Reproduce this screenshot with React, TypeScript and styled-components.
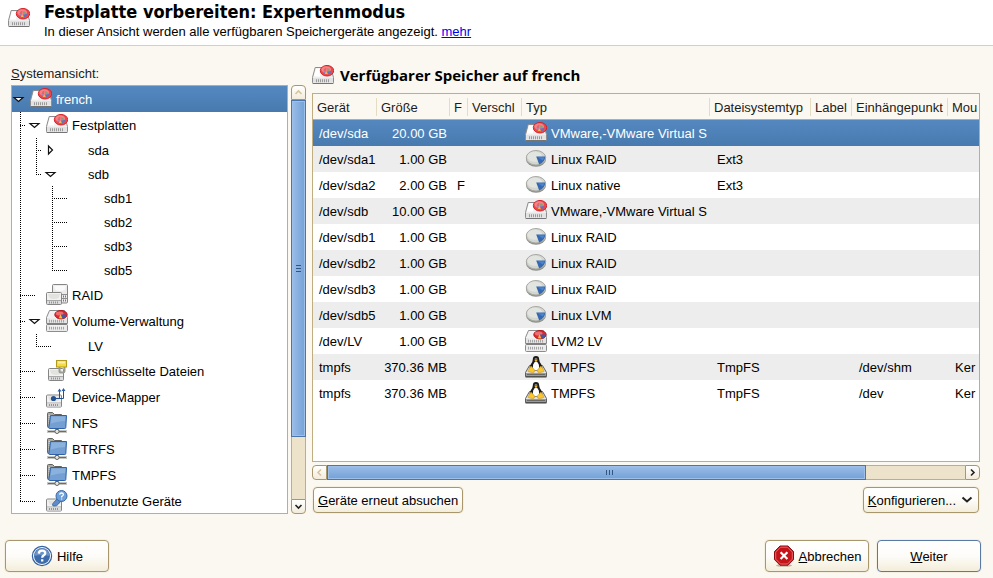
import React from 'react';
import styled, { createGlobalStyle, css } from 'styled-components';

const sand = '#c1ae80';
const sandDark = '#a8966c';
const sans = '"Liberation Sans", Arial, sans-serif';
const heading = '"Open Sans", "Noto Sans", sans-serif';

const GlobalStyle = createGlobalStyle`
  *, *::before, *::after { box-sizing: border-box; }
  body { margin: 0; background: #fbf8f1; color: #000; font: 13px/16px ${sans}; }
  button { font: inherit; color: inherit; margin: 0; }
`;

const Page = styled.div`
  display: flex;
  flex-direction: column;
  height: 100vh;
  overflow: hidden;
`;

const Header = styled.header`
  display: flex;
  align-items: flex-start;
  gap: 14px;
  height: 46px;
  padding: 0 8px;
  background: #fff;
  border-bottom: 1px solid #dccfb0;
`;

const HeaderIcon = styled.span`
  display: flex;
  padding-top: 8px;
`;

const Title = styled.h1`
  margin: 0;
  font: 700 18px/24px "DejaVu Sans Condensed", ${heading};
`;

const Subtitle = styled.p`
  margin: 0;
`;

const MoreLink = styled.a`
  color: #0000ee;
`;

const Main = styled.main`
  flex: 1;
  min-height: 0;
  display: grid;
  grid-template-columns: 295fr 668fr;
  column-gap: 6px;
  padding: 19px 13px 0 11px;
`;

const Column = styled.section`
  display: flex;
  flex-direction: column;
  min-width: 0;
  min-height: 0;
`;

const TreeLabel = styled.h2`
  margin: 0 0 2px;
  font: 13px/18px ${sans};
  color: #1c1c1c;
`;

const TreeArea = styled.div`
  flex: 1;
  min-height: 0;
  display: flex;
  gap: 3px;
`;

const Tree = styled.ul`
  flex: 1;
  display: flex;
  flex-direction: column;
  margin: 0;
  padding: 0;
  list-style: none;
  overflow: hidden;
  background: #fff;
  border: 1px solid ${sand};
`;

const selected = css`
  background: linear-gradient(#5588bf, #487aaf);
  color: #fff;
`;

const TreeRow = styled.li<{ $short?: boolean; $selected?: boolean }>`
  flex: none;
  display: flex;
  align-items: center;
  height: ${p => (p.$short ? 24 : 26)}px;
  ${p => p.$selected && selected}
`;

type GuideKind = 'none' | 'pass' | 'tee' | 'end';

const Guide = styled.span<{ $kind: GuideKind }>`
  flex: none;
  align-self: stretch;
  width: 16px;
  background-repeat: no-repeat;
  ${p => p.$kind !== 'none' && css`
    background-image: repeating-linear-gradient(#000 0 1px, transparent 1px 2px)
      ${p.$kind !== 'pass' && ', repeating-linear-gradient(90deg, #000 0 1px, transparent 1px 2px)'};
    background-size: 1px ${p.$kind === 'end' ? '50%' : '100%'}, 5px 1px;
    background-position: 8px 0, 8px 50%;
  `}
`;

const Slot = styled.span<{ $leaf?: boolean; $closed?: boolean }>`
  flex: none;
  display: flex;
  align-items: center;
  align-self: stretch;
  width: 18px;
  padding-left: ${p => (p.$closed ? 2 : 0)}px;
  ${p => p.$leaf && css`
    margin-left: -3px;
    margin-right: 3px;
    background: repeating-linear-gradient(90deg, transparent 0 1px, #000 1px 2px) 0 50% / 10px 1px no-repeat;
  `}
`;

const Expander = styled.button`
  display: flex;
  padding: 0;
  border: 0;
  background: none;
`;

const IconBox = styled.span`
  flex: none;
  display: flex;
  width: 22px;
  height: 22px;
  margin-right: 4px;
`;

const RowText = styled.span`
  padding-top: 2px;
`;

const ScrollArrow = styled.button<{ $horizontal?: boolean; $end?: boolean; $off?: boolean }>`
  flex: none;
  display: flex;
  align-items: center;
  justify-content: center;
  width: 15px;
  height: 15px;
  padding: 0;
  border: 1px solid ${sandDark};
  background: linear-gradient(#fff, #f3ecdb);
  color: ${p => (p.$off ? '#d6c59b' : '#222')};
  border-radius: ${p =>
    p.$horizontal ? (p.$end ? '0 4px 4px 0' : '4px 0 0 4px') : p.$end ? '0 0 4px 4px' : '4px 4px 0 0'};
`;

const ScrollBar = styled.div<{ $horizontal?: boolean }>`
  flex: none;
  display: flex;
  flex-direction: ${p => (p.$horizontal ? 'row' : 'column')};
  ${p => (p.$horizontal ? 'height: 15px; margin-top: 3px;' : 'width: 15px;')}
`;

const Track = styled.div<{ $horizontal?: boolean }>`
  flex: 1;
  display: flex;
  flex-direction: ${p => (p.$horizontal ? 'row' : 'column')};
  background: #ede3cb;
  border: solid ${sand};
  border-width: ${p => (p.$horizontal ? '1px 0' : '0 1px')};
`;

const Thumb = styled.div<{ $horizontal?: boolean }>`
  display: flex;
  align-items: center;
  justify-content: center;
  flex: 0 0 84.5%;
  border: 1px solid #4b76ab;
  box-shadow: inset 0 0 0 1px #9cc0ea;
  color: #33557f;
  ${p =>
    p.$horizontal
      ? 'margin: -1px 0; padding-left: 26px; background: linear-gradient(#99bde8, #74a1d6);'
      : 'margin: 0 -1px; background: linear-gradient(90deg, #99bde8, #74a1d6);'}
`;

const PanelHeading = styled.h2`
  display: flex;
  align-items: center;
  gap: 6px;
  height: 22px;
  margin: 0 0 6px;
  font: 700 15px/20px ${heading};
`;

const HeadingText = styled.span`
  padding-bottom: 2px;
`;

const TableFrame = styled.div`
  flex: 1;
  min-height: 0;
  overflow: hidden;
  background: #fff;
  border: 1px solid ${sand};
`;

const DeviceTable = styled.table`
  width: 100%;
  table-layout: fixed;
  border-collapse: separate;
  border-spacing: 0;
`;

const HeadCell = styled.th<{ $width?: number }>`
  width: ${p => (p.$width ? `${p.$width}px` : 'auto')};
  height: 26px;
  padding: 2px 0 0 4px;
  text-align: left;
  font-weight: 400;
  white-space: nowrap;
  overflow: hidden;
  color: #1c1c1c;
  border-bottom: 1px solid ${sand};
  background: #fbf8f1;
  &:not(:last-child) {
    background: linear-gradient(#e6dcc0, #e6dcc0) 100% 4px / 1px 18px no-repeat #fbf8f1;
  }
`;

const Row = styled.tr<{ $selected?: boolean }>`
  &:nth-child(even) { background: #ededed; }
  ${p => p.$selected && selected}
`;

const Cell = styled.td<{ $numeric?: boolean; $first?: boolean; $icon?: boolean }>`
  height: 26px;
  padding: ${p => (p.$icon ? 0 : 2)}px 3px 0 ${p => (p.$first ? 6 : p.$icon || p.$numeric ? 3 : 7)}px;
  text-align: ${p => (p.$numeric ? 'right' : 'left')};
  white-space: nowrap;
  overflow: hidden;
  &:last-child { padding-right: 0; }
`;

const TypeLabel = styled.span`
  display: flex;
  align-items: center;
`;

const Actions = styled.div`
  display: flex;
  justify-content: space-between;
  margin: 7px 1px 1px;
`;

const Button = styled.button<{ $large?: boolean; $primary?: boolean }>`
  display: flex;
  align-items: center;
  justify-content: center;
  gap: 4px;
  ${p => (p.$large ? 'width: 104px; height: 32px; padding: 0;' : 'height: 26px; padding: 0 4px;')}
  border: 1px solid ${p => (p.$primary ? '#5a7aa5' : sandDark)};
  border-radius: 4px;
  background: linear-gradient(#fff 0%, #fdfcf9 50%, #f3edda 100%);
  box-shadow: 0 0 0 1px #f5efe1;
  white-space: nowrap;
`;

const Footer = styled.footer`
  display: flex;
  gap: 8px;
  padding: 26px 12px 6px 5px;
`;

const Spacer = styled.span`
  flex: 1;
`;

/* ---------- icons ---------- */

const Icon = styled.svg.attrs({ width: 22, height: 22, viewBox: '0 0 22 22', 'aria-hidden': true })`
  flex: none;
  display: block;
`;

const DiskIcon = () => (
  <Icon>
    <path d="M3.2 2.5H18.6L21.5 12.5V17.5Q21.5 18.5 20.5 18.5H1.5Q.5 18.5 .5 17.5V12.5Z" fill="#efefef" stroke="#8c8c8c" />
    <path d="M4 3.4H9L8 11.5H1.8Z" fill="#fff" />
    <path d="M1 13H21V17.6H1Z" fill="#e2e2e2" />
    <path d="M4 15.8H18" stroke="#9a9a9a" strokeWidth="3" strokeDasharray="1 1" />
    <path d="M.8 18.5H21.2" stroke="#747474" />
    <ellipse cx="15" cy="5.7" rx="6.7" ry="5.3" fill="#f0474b" stroke="#d3252b" />
    <ellipse cx="14.2" cy="4.6" rx="4.8" ry="3.4" fill="#f58386" />
    <path d="M14.4 2.6Q12 3 11.4 5.8L14.2 6.2Z" fill="#e2656c" />
    <path d="M15 3.2Q17.6 3.2 18.4 5.6L15.4 6Z" fill="#86a070" />
    <path d="M14.8 6.4L19.4 6Q18.8 8.8 16.6 9.2Z" fill="#5577c4" />
    <path d="M14.2 6.4L16 9.2L12.8 8.8Z" fill="#edbd50" />
    <path d="M11.6 6.2L14 6.4L12.6 8.6Q11.6 7.6 11.6 6.2Z" fill="#8385c8" />
  </Icon>
);

const PartitionIcon = () => (
  <Icon>
    <ellipse cx="11" cy="11.2" rx="10" ry="7.6" fill="#8f918c" />
    <ellipse cx="11" cy="9.8" rx="9.7" ry="7.3" fill="#d3d5cf" stroke="#a6a8a2" />
    <ellipse cx="9.8" cy="8.6" rx="7.4" ry="5.2" fill="#e2e4df" />
    <path d="M11.2 8.4H20.2Q20.4 13.8 14.2 16.4Z" fill="#3569b2" />
    <path d="M13 9.2H19.4Q19 11.2 17.6 12.6Z" fill="#4d83ca" />
  </Icon>
);

const Drive = ({ x, y }: { x: number; y: number }) => (
  <g transform={`translate(${x} ${y})`}>
    <rect x=".5" y=".5" width="15" height="12" rx="1" fill="#f2f2f2" stroke="#858585" />
    <path d="M2 2H14L12.6 6Q8 8 3.4 6Z" fill="#e2e2de" />
    <path d="M1 8.5H15" stroke="#a8a8a8" />
    <path d="M1 9H15V12H1Z" fill="#dcdcdc" />
    <path d="M3 10.5H12" stroke="#959595" strokeWidth="2" strokeDasharray="1 1" />
  </g>
);

const RaidIcon = () => (
  <Icon>
    <rect x="6.5" y=".5" width="15" height="18.5" rx="1" fill="#ececec" stroke="#858585" />
    <path d="M8 2H20L18.6 6Q14 8 9.4 6Z" fill="#fafafa" />
    <path d="M7 10.5H21M7 14.5H21" stroke="#8f8f8f" />
    <path d="M17 12.6H20M17 16.6H20" stroke="#777" strokeWidth="2" strokeDasharray="1 1" />
    <Drive x={0} y={8} />
  </Icon>
);

const VolumeIcon = () => (
  <Icon>
    <path d="M3.5 .5H18.5L21.5 7.5V13.5H.5V7.5Z" fill="#f2f2f2" stroke="#8c8c8c" />
    <path d="M1 8H21V13H1Z" fill="#e4e4e4" />
    <rect x=".5" y="14.5" width="21" height="7" rx="1" fill="#ebebeb" stroke="#8c8c8c" />
    <path d="M1 14H21" stroke="#747474" />
    <path d="M3 11H18M3 18H18" stroke="#a6a6a6" strokeWidth="3" strokeDasharray="1 1" />
    <path d="M3.5 9H18.5M3.5 16H18.5" stroke="#f8f8f8" />
    <ellipse cx="15" cy="4.7" rx="6.2" ry="4.2" fill="#dd2a30" stroke="#b0181e" />
    <ellipse cx="13.6" cy="3.6" rx="3.8" ry="2" fill="#ef6c6f" />
    <path d="M15 4.4H20.4Q20.2 8.2 16.6 8.6Z" fill="#3a5cab" />
    <path d="M14.6 4.2L16.4 8.6L12.8 8.2Z" fill="#f0c63a" />
  </Icon>
);

const EncryptedIcon = () => (
  <Icon>
    <Drive x={2} y={8} />
    <path d="M13.5 7V11Q13.5 12.5 15 12.5H17Q18.5 12.5 18.5 10.5V7" fill="none" stroke="#9b9b94" strokeWidth="2" />
    <rect x="10.5" y=".5" width="10" height="6.5" fill="#f3dc45" stroke="#b39a1c" />
    <path d="M12 2.5H19" stroke="#fbf0a0" strokeWidth="2" />
  </Icon>
);

const MapperIcon = () => (
  <Icon>
    <Drive x={0} y={8.5} />
    <path d="M8 12.5H17.5V3M13.5 12V4" fill="none" stroke="#24508f" />
    <path d="M15.5 5L17.5 2L19.5 5ZM11.5 5.4L13.5 2.6L15.5 5.4Z" fill="#2c5ea6" />
    <circle cx="7.5" cy="12.5" r="2.6" fill="#24508f" />
  </Icon>
);

const NetFolderIcon = () => (
  <Icon>
    <path d="M1.5 1.5Q1.5 .5 2.5 .5H6.5L8.5 2.5H15.5V15.5H2.5Q1.5 15.5 1.5 14.5Z" fill="#a9aaa6" stroke="#63645f" />
    <path d="M2.5 3.5H14M2.5 5.5H4M2.5 7.5H4M2.5 9.5H4M2.5 11.5H4" stroke="#d2d2ce" />
    <path d="M1 19.5H21" stroke="#c4c4c0" strokeWidth="3" />
    <path d="M2 19.5H20" stroke="#6c6d69" />
    <path d="M11 16V19" stroke="#555" strokeWidth="3" />
    <path d="M4.5 3.5H20.5L19.8 15.5Q19.7 16.5 18.8 16.5H3.6Q2.7 16.5 2.8 15.5Z" fill="#739fd3" stroke="#2f61a6" />
    <path d="M5.4 4.6H19.4L19 9Q12 9 4.8 11.5Z" fill="#8bb2dc" />
    <circle cx="11" cy="19.4" r="2.1" fill="#e6e6e2" stroke="#63645f" />
  </Icon>
);

const UnusedIcon = () => (
  <Icon>
    <Drive x={0} y={8.5} />
    <path d="M12 8L7 13.4Q5.6 16 8.4 16Q11 16.2 12.4 14L15 11Z" fill="#5e8dc7" stroke="#3a69a8" />
    <circle cx="15.5" cy="6" r="5.5" fill="#6f9fd8" stroke="#3a69a8" />
    <path d="M13.6 4.6Q13.8 3 15.5 3Q17.4 3 17.4 4.6Q17.4 5.6 15.6 6.6V7.4M15.6 8.4V9.6" fill="none" stroke="#fff" strokeWidth="1.3" />
  </Icon>
);

const TuxIcon = () => (
  <Icon>
    <path d="M4.5 9.5H17.5L21.5 16.5V20.5H.5V16.5Z" fill="#e3e3e3" stroke="#5d5d5d" />
    <path d="M1 17H21V20H1Z" fill="#9b9b9b" />
    <path d="M2 18.5H20" stroke="#6a6a6a" />
    <path d="M.5 21H21.5" stroke="#444" />
    <path d="M11 0Q14.2 0 14.2 3.4Q14.2 5.6 16.2 8.2Q17.8 10.6 17 13L13 15H9L5 13Q4.2 10.6 5.8 8.2Q7.8 5.6 7.8 3.4Q7.8 0 11 0Z" fill="#1a1a1a" />
    <path d="M11 5.2Q12.6 5.4 13.8 8.6Q14.8 12 13.4 14.6H8.6Q7.2 12 8.2 8.6Q9.4 5.4 11 5.2Z" fill="#fdfdfd" />
    <path d="M9.8 3.2Q10 2.2 10.7 3.2M11.4 3.2Q12 2.2 12.3 3.2" stroke="#fff" fill="none" />
    <path d="M9.4 4.2L11 3.6L12.6 4.2L11 5.8Z" fill="#f5b81c" />
    <path d="M6 10L9.8 14.2Q9.8 17 7.4 16.6L3.2 15.6Q2.8 14.4 4 13.2ZM16 10L12.2 14.2Q12.2 17 14.6 16.6L18.8 15.6Q19.2 14.4 18 13.2Z" fill="#fac72c" stroke="#c8921a" strokeWidth=".6" />
  </Icon>
);

const HelpIcon = () => (
  <Icon>
    <circle cx="11" cy="11" r="9.6" fill="#fff" stroke="#34609f" strokeWidth="1.2" />
    <circle cx="11" cy="11" r="8" fill="#3e6bab" />
    <path d="M3.4 11A7.6 7.6 0 0 1 18.6 11Q11 9 3.4 11Z" fill="#6b93c8" />
    <path d="M7.8 8.6Q8 5.6 11 5.6Q14.2 5.6 14.2 8.2Q14.2 9.8 12.4 10.6Q11.2 11.2 11.2 12.8M11.2 14.2V16.6" fill="none" stroke="#fff" strokeWidth="2.3" />
  </Icon>
);

const StopIcon = () => (
  <Icon>
    <ellipse cx="11" cy="20.4" rx="8" ry="1.4" fill="#bdb6a8" />
    <path d="M7 1H15L20.5 6.6V14.6L15 20.2H7L1.5 14.6V6.6Z" fill="#c4141a" stroke="#8e0b10" />
    <path d="M7.5 2.2H14.5L19.3 7.1V14.1L14.5 19H7.5L2.7 14.1V7.1Z" fill="none" stroke="#e5696d" />
    <path d="M7.6 7.2L14.4 14M14.4 7.2L7.6 14" stroke="#fff" strokeWidth="2.2" />
  </Icon>
);

const ArrowDown = ({ light }: { light?: boolean }) => (
  <svg width="13" height="9" viewBox="0 0 13 9" aria-hidden="true">
    <path d="M2 2.5H11L6.5 6.5Z" fill={light ? '#fff' : 'none'} stroke="#111" strokeWidth="1.2" />
  </svg>
);

const ArrowRight = () => (
  <svg width="9" height="13" viewBox="0 0 9 13" aria-hidden="true">
    <path d="M2.5 2V10L6.5 6Z" fill="none" stroke="#111" strokeWidth="1.2" />
  </svg>
);

const Chevron = ({ dir }: { dir: 'up' | 'down' | 'left' | 'right' }) => {
  const d = { up: 'M1.5 6L4.5 3L7.5 6', down: 'M1.5 3L4.5 6L7.5 3', left: 'M6 1.5L3 4.5L6 7.5', right: 'M3 1.5L6 4.5L3 7.5' }[dir];
  return (
    <svg width="9" height="9" viewBox="0 0 9 9" aria-hidden="true">
      <path d={d} fill="none" stroke="currentColor" strokeWidth="1.6" />
    </svg>
  );
};

const Grip = ({ horizontal }: { horizontal?: boolean }) => (
  <svg width="7" height="7" viewBox="0 0 7 7" aria-hidden="true">
    <path
      d={horizontal ? 'M.5 1V6M3.5 1V6M6.5 1V6' : 'M1 .5H6M1 3.5H6M1 6.5H6'}
      stroke="currentColor"
      fill="none"
    />
  </svg>
);

/* ---------- data ---------- */

type IconName = 'disk' | 'part' | 'raid' | 'volume' | 'crypt' | 'mapper' | 'folder' | 'unused' | 'tux';

const icons: Record<IconName, React.FC> = {
  disk: DiskIcon,
  part: PartitionIcon,
  raid: RaidIcon,
  volume: VolumeIcon,
  crypt: EncryptedIcon,
  mapper: MapperIcon,
  folder: NetFolderIcon,
  unused: UnusedIcon,
  tux: TuxIcon,
};

interface TreeNode {
  label: string;
  guides: GuideKind[];
  icon?: IconName;
  state?: 'open' | 'closed';
}

const nodes: TreeNode[] = [
  { label: 'french', guides: [], icon: 'disk', state: 'open' },
  { label: 'Festplatten', guides: ['tee'], icon: 'disk', state: 'open' },
  { label: 'sda', guides: ['pass', 'tee'], state: 'closed' },
  { label: 'sdb', guides: ['pass', 'end'], state: 'open' },
  { label: 'sdb1', guides: ['pass', 'none', 'tee'] },
  { label: 'sdb2', guides: ['pass', 'none', 'tee'] },
  { label: 'sdb3', guides: ['pass', 'none', 'tee'] },
  { label: 'sdb5', guides: ['pass', 'none', 'end'] },
  { label: 'RAID', guides: ['tee'], icon: 'raid' },
  { label: 'Volume-Verwaltung', guides: ['tee'], icon: 'volume', state: 'open' },
  { label: 'LV', guides: ['pass', 'end'] },
  { label: 'Verschlüsselte Dateien', guides: ['tee'], icon: 'crypt' },
  { label: 'Device-Mapper', guides: ['tee'], icon: 'mapper' },
  { label: 'NFS', guides: ['tee'], icon: 'folder' },
  { label: 'BTRFS', guides: ['tee'], icon: 'folder' },
  { label: 'TMPFS', guides: ['tee'], icon: 'folder' },
  { label: 'Unbenutzte Geräte', guides: ['end'], icon: 'unused' },
];

const columns: [string, number?][] = [
  ['Gerät', 64],
  ['Größe', 73],
  ['F', 18],
  ['Verschl', 54],
  ['Typ', 188],
  ['Dateisystemtyp', 101],
  ['Label', 41],
  ['Einhängepunkt', 96],
  ['Mou'],
];

interface Device {
  name: string;
  size: string;
  icon: IconName;
  type: string;
  flag?: string;
  fs?: string;
  mount?: string;
  by?: string;
}

const devices: Device[] = [
  { name: '/dev/sda', size: '20.00 GB', icon: 'disk', type: 'VMware,-VMware Virtual S' },
  { name: '/dev/sda1', size: '1.00 GB', icon: 'part', type: 'Linux RAID', fs: 'Ext3' },
  { name: '/dev/sda2', size: '2.00 GB', icon: 'part', type: 'Linux native', flag: 'F', fs: 'Ext3' },
  { name: '/dev/sdb', size: '10.00 GB', icon: 'disk', type: 'VMware,-VMware Virtual S' },
  { name: '/dev/sdb1', size: '1.00 GB', icon: 'part', type: 'Linux RAID' },
  { name: '/dev/sdb2', size: '1.00 GB', icon: 'part', type: 'Linux RAID' },
  { name: '/dev/sdb3', size: '1.00 GB', icon: 'part', type: 'Linux RAID' },
  { name: '/dev/sdb5', size: '1.00 GB', icon: 'part', type: 'Linux LVM' },
  { name: '/dev/LV', size: '1.00 GB', icon: 'volume', type: 'LVM2 LV' },
  { name: 'tmpfs', size: '370.36 MB', icon: 'tux', type: 'TMPFS', fs: 'TmpFS', mount: '/dev/shm', by: 'Ker' },
  { name: 'tmpfs', size: '370.36 MB', icon: 'tux', type: 'TMPFS', fs: 'TmpFS', mount: '/dev', by: 'Ker' },
];

const TreeItem = ({ node, active }: { node: TreeNode; active: boolean }) => {
  const Glyph = node.icon && icons[node.icon];
  return (
    <TreeRow
      role="treeitem"
      aria-level={node.guides.length + 1}
      aria-selected={active}
      aria-expanded={node.state ? node.state === 'open' : undefined}
      $short={!node.icon}
      $selected={active}
    >
      {node.guides.map((kind, i) => (
        <Guide key={i} $kind={kind} />
      ))}
      <Slot $leaf={!node.state} $closed={node.state === 'closed'}>
        {node.state && (
          <Expander type="button" aria-label={`${node.label} umschalten`}>
            {node.state === 'open' ? <ArrowDown light={active} /> : <ArrowRight />}
          </Expander>
        )}
      </Slot>
      <IconBox>{Glyph && <Glyph />}</IconBox>
      <RowText>{node.label}</RowText>
    </TreeRow>
  );
};

export default function App() {
  return (
    <Page>
      <GlobalStyle />
      <Header>
        <HeaderIcon>
          <DiskIcon />
        </HeaderIcon>
        <div>
          <Title>Festplatte vorbereiten: Expertenmodus</Title>
          <Subtitle>
            In dieser Ansicht werden alle verfügbaren Speichergeräte angezeigt. <MoreLink href="#mehr">mehr</MoreLink>
          </Subtitle>
        </div>
      </Header>

      <Main>
        <Column>
          <TreeLabel id="tree-label">
            <u>S</u>ystemansicht:
          </TreeLabel>
          <TreeArea>
            <Tree role="tree" aria-labelledby="tree-label">
              {nodes.map((node, i) => (
                <TreeItem key={node.label} node={node} active={i === 0} />
              ))}
            </Tree>
            <ScrollBar>
              <ScrollArrow type="button" aria-label="Nach oben" $off>
                <Chevron dir="up" />
              </ScrollArrow>
              <Track>
                <Thumb>
                  <Grip />
                </Thumb>
              </Track>
              <ScrollArrow type="button" aria-label="Nach unten" $end>
                <Chevron dir="down" />
              </ScrollArrow>
            </ScrollBar>
          </TreeArea>
        </Column>

        <Column>
          <PanelHeading>
            <DiskIcon />
            <HeadingText>Verfügbarer Speicher auf french</HeadingText>
          </PanelHeading>
          <TableFrame>
            <DeviceTable>
              <thead>
                <tr>
                  {columns.map(([name, width]) => (
                    <HeadCell key={name} scope="col" $width={width}>
                      {name}
                    </HeadCell>
                  ))}
                </tr>
              </thead>
              <tbody>
                {devices.map((d, i) => {
                  const Glyph = icons[d.icon];
                  return (
                    <Row key={i} $selected={i === 0}>
                      <Cell $first>{d.name}</Cell>
                      <Cell $numeric>{d.size}</Cell>
                      <Cell>{d.flag}</Cell>
                      <Cell />
                      <Cell $icon>
                        <TypeLabel>
                          <IconBox>
                            <Glyph />
                          </IconBox>
                          <RowText>{d.type}</RowText>
                        </TypeLabel>
                      </Cell>
                      <Cell>{d.fs}</Cell>
                      <Cell />
                      <Cell>{d.mount}</Cell>
                      <Cell>{d.by}</Cell>
                    </Row>
                  );
                })}
              </tbody>
            </DeviceTable>
          </TableFrame>
          <ScrollBar $horizontal>
            <ScrollArrow type="button" aria-label="Nach links" $horizontal $off>
              <Chevron dir="left" />
            </ScrollArrow>
            <Track $horizontal>
              <Thumb $horizontal>
                <Grip horizontal />
              </Thumb>
            </Track>
            <ScrollArrow type="button" aria-label="Nach rechts" $horizontal $end>
              <Chevron dir="right" />
            </ScrollArrow>
          </ScrollBar>
          <Actions>
            <Button type="button">
              <RowText>
                <u>G</u>eräte erneut absuchen
              </RowText>
            </Button>
            <Button type="button" aria-haspopup="menu">
              <RowText>
                <u>K</u>onfigurieren...
              </RowText>
              <svg width="14" height="8" viewBox="0 0 14 8" aria-hidden="true">
                <path d="M2.5 1.5L7 5.5L11.5 1.5" fill="none" stroke="#222" strokeWidth="2" />
              </svg>
            </Button>
          </Actions>
        </Column>
      </Main>

      <Footer>
        <Button type="button" $large>
          <HelpIcon />
          <RowText>Hilfe</RowText>
        </Button>
        <Spacer />
        <Button type="button" $large>
          <StopIcon />
          <RowText>
            <u>A</u>bbrechen
          </RowText>
        </Button>
        <Button type="button" $large $primary>
          <RowText>
            <u>W</u>eiter
          </RowText>
        </Button>
      </Footer>
    </Page>
  );
}
